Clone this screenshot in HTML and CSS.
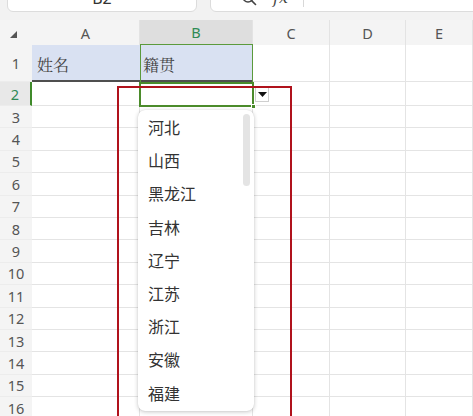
FILE: index.html
```html
<!DOCTYPE html>
<html lang="zh-CN">
<head>
<meta charset="utf-8">
<title>数据有效性下拉列表</title>
<link rel="stylesheet" href="styles.css">
</head>
<body>
<div class="app">
  <div class="toolbar">
    <div class="namebox">B2</div>
    <div class="formulabox">
      <svg class="search" width="16" height="16" viewBox="0 0 16 16"><circle cx="7" cy="7" r="5" fill="none" stroke="#444" stroke-width="1.5"/><path d="M10.6 10.6 L14.5 14.5" stroke="#444" stroke-width="1.6" stroke-linecap="round"/></svg>
      <span class="fx">fx</span>
      <span class="sep"></span>
    </div>
  </div>
  <div class="sheet">
    <div class="row hdr">
      <div class="corner"><svg width="8" height="8" viewBox="0 0 8 8"><polygon points="7,0 7,7 0,7" fill="#555"/></svg></div>
      <div class="ch">A</div>
      <div class="ch sel">B</div>
      <div class="ch">C</div>
      <div class="ch">D</div>
      <div class="ch">E</div>
    </div>
    <div class="row r1"><div class="rh">1</div><div class="c head">姓名</div><div class="c head hb">籍贯</div><div class="c"></div><div class="c"></div><div class="c"></div></div>
    <div class="row r2"><div class="rh act">2</div><div class="c"></div><div class="c"></div><div class="c"></div><div class="c"></div><div class="c"></div></div>
    <div class="row"><div class="rh">3</div><div class="c"></div><div class="c"></div><div class="c"></div><div class="c"></div><div class="c"></div></div>
    <div class="row"><div class="rh">4</div><div class="c"></div><div class="c"></div><div class="c"></div><div class="c"></div><div class="c"></div></div>
    <div class="row"><div class="rh">5</div><div class="c"></div><div class="c"></div><div class="c"></div><div class="c"></div><div class="c"></div></div>
    <div class="row"><div class="rh">6</div><div class="c"></div><div class="c"></div><div class="c"></div><div class="c"></div><div class="c"></div></div>
    <div class="row"><div class="rh">7</div><div class="c"></div><div class="c"></div><div class="c"></div><div class="c"></div><div class="c"></div></div>
    <div class="row"><div class="rh">8</div><div class="c"></div><div class="c"></div><div class="c"></div><div class="c"></div><div class="c"></div></div>
    <div class="row"><div class="rh">9</div><div class="c"></div><div class="c"></div><div class="c"></div><div class="c"></div><div class="c"></div></div>
    <div class="row"><div class="rh">10</div><div class="c"></div><div class="c"></div><div class="c"></div><div class="c"></div><div class="c"></div></div>
    <div class="row"><div class="rh">11</div><div class="c"></div><div class="c"></div><div class="c"></div><div class="c"></div><div class="c"></div></div>
    <div class="row"><div class="rh">12</div><div class="c"></div><div class="c"></div><div class="c"></div><div class="c"></div><div class="c"></div></div>
    <div class="row"><div class="rh">13</div><div class="c"></div><div class="c"></div><div class="c"></div><div class="c"></div><div class="c"></div></div>
    <div class="row"><div class="rh">14</div><div class="c"></div><div class="c"></div><div class="c"></div><div class="c"></div><div class="c"></div></div>
    <div class="row"><div class="rh">15</div><div class="c"></div><div class="c"></div><div class="c"></div><div class="c"></div><div class="c"></div></div>
    <div class="row"><div class="rh">16</div><div class="c"></div><div class="c"></div><div class="c"></div><div class="c"></div><div class="c"></div></div>

    <div class="b1-outline"></div>
    <div class="active-cell"><span class="handle"></span></div>
    <div class="dd-btn"><svg width="9" height="5" viewBox="0 0 9 5"><polygon points="0,0 9,0 4.5,5" fill="#111"/></svg></div>
    <div class="red-box"></div>
    <ul class="dropdown">
      <li>河北</li>
      <li>山西</li>
      <li>黑龙江</li>
      <li>吉林</li>
      <li>辽宁</li>
      <li>江苏</li>
      <li>浙江</li>
      <li>安徽</li>
      <li>福建</li>
      <span class="scroll"></span>
    </ul>
  </div>
</div>
</body>
</html>
```

FILE: styles.css
```css
* { box-sizing: border-box; }
html, body { margin: 0; padding: 0; background: #fff; }
body { font-family: "Noto Sans", "Noto Sans CJK SC", sans-serif; }
.app { width: 473px; height: 416px; overflow: hidden; }

.toolbar {
  height: 20px;
  background: #f2f2f2;
  display: flex;
  gap: 13px;
  padding-left: 7px;
}
.namebox, .formulabox {
  height: 26px;
  margin-top: -14px;
  background: #fff;
  border: 1px solid #dcdcdc;
  border-radius: 6px;
}
.namebox {
  width: 190px;
  text-align: center;
  font-size: 16px;
  line-height: 23px;
  color: #333;
}
.formulabox {
  flex: 1;
  display: flex;
  align-items: flex-start;
  padding-left: 30px;
  margin-right: -10px;
}
.search { margin-top: 3px; }
.fx {
  margin-left: 16px;
  font-family: "DejaVu Serif", serif;
  font-style: italic;
  font-size: 16px;
  line-height: 22px;
  color: #444;
}
.sep {
  width: 1px;
  height: 20px;
  background: #d8d8d8;
  margin-left: 15px;
}

.sheet { position: relative; }
.row {
  display: grid;
  grid-template-columns: 32px 108px 113px 77px 76px 1fr;
  height: 22.4px;
}
.row.hdr { height: 25px; background: #f4f4f4; }
.row.r1 { height: 37px; }
.row.r2 { height: 24px; }

.corner { display: flex; align-items: center; justify-content: center; padding-top: 5px; padding-right: 4px; }
.ch {
  font-size: 14.5px;
  color: #555;
  display: flex;
  align-items: center;
  justify-content: center;
  border-right: 1px solid #e3e3e3;
}
.ch.sel {
  background: #dedede;
  color: #2f8a55;
  border-bottom: 1.5px solid #4b8b2b;
}

.rh {
  background: #f4f4f4;
  color: #555;
  font-size: 14.5px;
  display: flex;
  align-items: center;
  justify-content: center;
  border-bottom: 1px solid #ececec;
}
.rh.act {
  background: #e8e8e8;
  color: #2f8a55;
  border-right: 2px solid #3f8a2a;
}
.c {
  border-right: 1px solid #e4e4e4;
  border-bottom: 1px solid #e4e4e4;
}
.c.head {
  background: #d9e1f2;
  border-bottom: 2px solid #4f4f4f;
  border-right: none;
  font-family: "Noto Serif CJK SC", "AR PL UMing CN", "Noto Sans CJK SC", serif;
  font-size: 16px;
  color: #444;
  display: flex;
  align-items: center;
  padding-left: 5px;
  padding-top: 4px;
}
.c.head.hb { border-right: 1.5px solid #4f4f4f; padding-left: 3px; }

.b1-outline {
  position: absolute;
  left: 140px; top: 24px;
  width: 113px; height: 39px;
  border: 1px solid #5b9a3c;
  border-bottom: none;
}
.active-cell {
  position: absolute;
  left: 139px; top: 62px;
  width: 115px; height: 25px;
  border: 2px solid #4b8b2b;
}
.handle {
  position: absolute;
  right: -4px; bottom: -4px;
  width: 5px; height: 5px;
  background: #4b8b2b;
  border: 1px solid #fff;
}
.dd-btn {
  position: absolute;
  left: 255px; top: 67px;
  width: 14px; height: 15px;
  background: #fff;
  border: 1px solid #cfcfcf;
  display: flex;
  align-items: center;
  justify-content: center;
}
.red-box {
  position: absolute;
  left: 117px; top: 66px;
  width: 175px; height: 400px;
  border: 2.5px solid #b0121c;
}
.dropdown {
  position: absolute;
  left: 138px; top: 90px;
  width: 116px; height: 301px;
  margin: 0;
  padding: 1px 0 0 10px;
  list-style: none;
  background: #fff;
  border-radius: 7px;
  box-shadow: 0 1px 4px rgba(0,0,0,0.22), 0 0 1px rgba(0,0,0,0.15);
  font-family: "Noto Sans CJK SC", sans-serif;
  font-size: 16px;
  color: #333;
}
.dropdown li { height: 33.2px; line-height: 33.2px; }
.scroll {
  position: absolute;
  left: 105px; top: 4px;
  width: 7px; height: 72px;
  background: #e4e4e4;
  border-radius: 4px;
}
```
